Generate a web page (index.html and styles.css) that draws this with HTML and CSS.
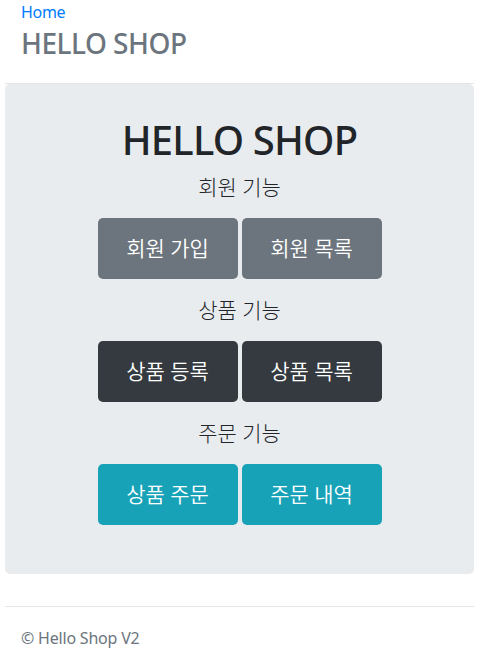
FILE: index.html
```html
<!DOCTYPE html>
<html lang="ko">
<head>
<meta charset="utf-8">
<title>HELLO SHOP</title>
<link rel="stylesheet" href="styles.css">
</head>
<body>
<div class="container">
  <div class="header">
    <nav class="nav"><a class="nav-link" href="#">Home</a></nav>
    <h3 class="brand">HELLO SHOP</h3>
  </div>
  <div class="jumbotron">
    <h1 class="title">HELLO SHOP</h1>
    <p class="lead">회원 기능</p>
    <p class="btn-row">
      <a class="btn btn-secondary" href="#">회원 가입</a>
      <a class="btn btn-secondary" href="#">회원 목록</a>
    </p>
    <p class="lead">상품 기능</p>
    <p class="btn-row">
      <a class="btn btn-dark" href="#">상품 등록</a>
      <a class="btn btn-dark" href="#">상품 목록</a>
    </p>
    <p class="lead">주문 기능</p>
    <p class="btn-row">
      <a class="btn btn-info" href="#">상품 주문</a>
      <a class="btn btn-info" href="#">주문 내역</a>
    </p>
  </div>
  <div class="footer">
    <p class="copy">© Hello Shop V2</p>
  </div>
</div>
</body>
</html>
```

FILE: styles.css
```css
* { box-sizing: border-box; }
html, body {
  margin: 0;
  padding: 0;
  background: #fff;
}
body {
  font-family: "Noto Sans", "Noto Sans CJK KR", sans-serif;
  font-size: 16px;
  line-height: 24px;
  color: #212529;
}
.container {
  padding: 0 5px;
}
.header {
  padding: 0 16px 23px;
  border-bottom: 1px solid #e5e5e5;
}
.nav-link {
  display: block;
  color: #007bff;
  text-decoration: none;
  line-height: 24px;
  letter-spacing: -0.3px;
}
.brand {
  margin: 2px 0 0;
  font-size: 28px;
  line-height: 34px;
  font-weight: 500;
  letter-spacing: -0.5px;
  color: #6c757d;
}
.jumbotron {
  background: #e9ecef;
  border-radius: 5px;
  padding: 32px 16px 33px;
  text-align: center;
}
.title {
  margin: 0 0 8px;
  font-size: 40px;
  line-height: 48px;
  font-weight: 500;
  letter-spacing: -0.8px;
  color: #212529;
}
.lead {
  margin: 0;
  font-size: 21px;
  line-height: 30px;
  font-weight: 300;
}
.btn-row {
  margin: 16px 0;
  display: flex;
  justify-content: center;
  gap: 4px;
}
.btn {
  display: inline-block;
  min-width: 140px;
  padding: 15px 26px;
  font-size: 21px;
  line-height: 31px;
  font-weight: 350;
  color: #fff;
  text-decoration: none;
  border-radius: 5px;
  text-align: center;
}
.btn-secondary { background: #6c757d; }
.btn-dark { background: #343a40; }
.btn-info { background: #17a2b8; }
.footer {
  margin-top: 32px;
  border-top: 1px solid #e5e5e5;
  padding: 19px 16px 0;
}
.copy {
  margin: 0;
  color: #6c757d;
  letter-spacing: -0.2px;
}
```
